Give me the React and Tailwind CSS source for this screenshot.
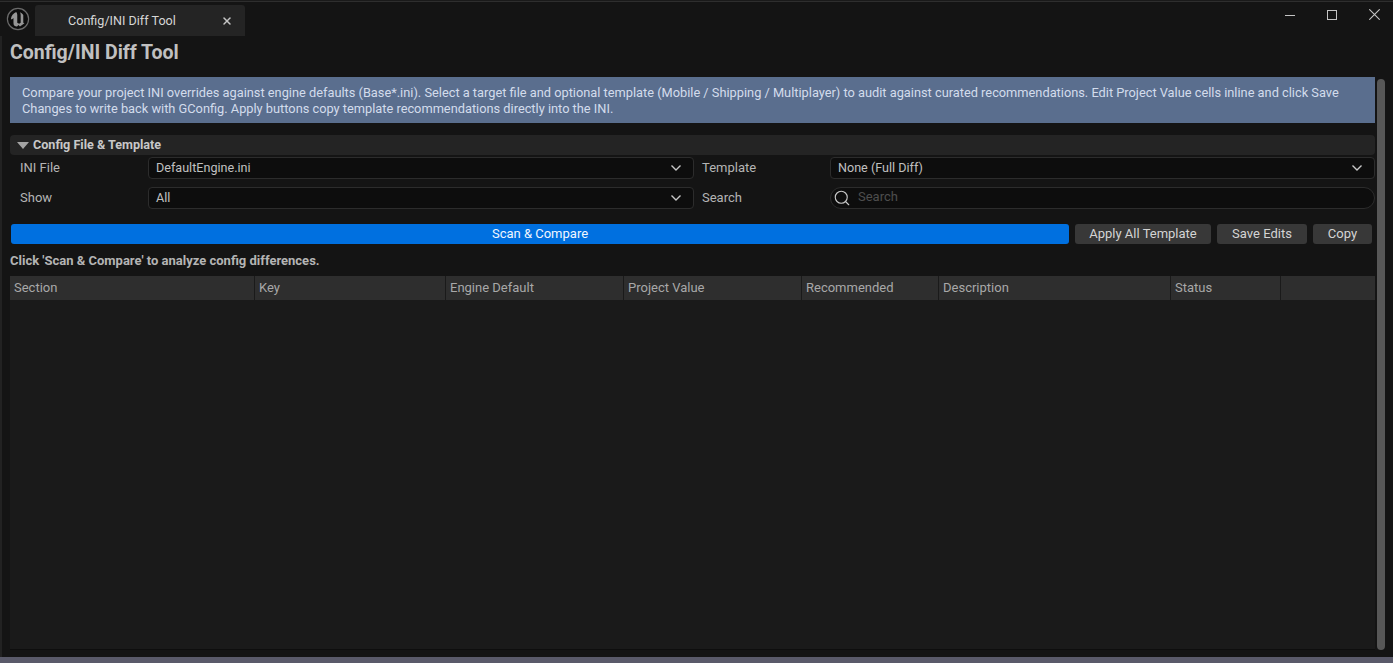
import { Search, X } from "lucide-react";

const columns = [
  { label: "Section", width: "w-[245px]" },
  { label: "Key", width: "w-[191px]" },
  { label: "Engine Default", width: "w-[178px]" },
  { label: "Project Value", width: "w-[178px]" },
  { label: "Recommended", width: "w-[137px]" },
  { label: "Description", width: "w-[232px]" },
  { label: "Status", width: "w-[110px]" },
  { label: "", width: "flex-1" },
];

function UnrealLogo() {
  return (
    <svg width="24" height="24" viewBox="0 0 24 24" className="shrink-0">
      <circle cx="12" cy="12" r="10.6" fill="#0d0d0d" stroke="#6a6a6a" strokeWidth="1.2" />
      <path
        transform="translate(-2.2 -2.2) scale(1.18)"
        d="M10.5 6.200C8 7.300 6.300 9.500 6 12.200c.9 0 1.700-.4 2.200-1.100v4.500c0 1.900 1.500 2.800 3 2.700l1.300-1.200 1.200 1.300 3.800-2.700-1-.5V8.600c-.9-1-1.700-1.600-2.800-2.200.5.800.6 1.600.6 2.200v6.700l-1.300.7-1.600-.8V8.500c0-.9-.4-1.700-.9-2.300z"
        fill="#969696"
      />
    </svg>
  );
}

function Chevron() {
  return (
    <svg width="10" height="6" viewBox="0 0 10 6" fill="none" stroke="#c8c8c8" strokeWidth="1.4">
      <path d="M.5.600 5 5 9.500.600" />
    </svg>
  );
}

function Dropdown({ value }) {
  return (
    <div className="flex h-[22px] items-center justify-between rounded-[4px] border border-[#2c2c2c] bg-[#0d0d0d] pl-[7px] pr-[12px] text-[12.6px] text-[#c0c0c0]">
      <span>{value}</span>
      <Chevron />
    </div>
  );
}

function ActionButton({ children, width }) {
  return (
    <button className={`h-5 rounded-[3px] bg-[#383838] text-[#d4d4d4] ${width}`}>{children}</button>
  );
}

export default function App() {
  return (
    <div className="flex h-screen w-full flex-col overflow-hidden bg-[#141414] font-['Roboto',sans-serif] text-[13px] leading-4">
      {/* Window chrome */}
      <div className="h-[2px] shrink-0 border-t border-t-[#1a1a1a] bg-[#2e2e2e]" />
      <div className="flex h-[34px] shrink-0 items-start pl-[6px]">
        <div className="mt-[5px]">
          <UnrealLogo />
        </div>
        <div className="ml-[5px] mt-[3px] flex h-[31px] w-[210px] items-center rounded-t-[3px] bg-[#242424] pl-[33px] pr-[12px] text-[12.6px] text-[#d6d6d6]">
          <span className="flex-1">Config/INI Diff Tool</span>
          <X size={12} strokeWidth={3} className="text-[#c4c4c4]" />
        </div>
        <div className="ml-auto flex gap-[31px] pr-[13px] pt-[7px]">
          <svg width="11" height="11" viewBox="0 0 11 11" stroke="#c4c4c4" strokeWidth="1">
            <path d="M0 6.500h10" />
          </svg>
          <svg width="11" height="11" viewBox="0 0 11 11" fill="none" stroke="#c4c4c4" strokeWidth="1">
            <rect x=".5" y="1.500" width="9" height="9" />
          </svg>
          <svg width="11" height="11" viewBox="0 0 11 11" stroke="#c4c4c4" strokeWidth="1.100">
            <path d="M.3.300l10.400 10.400M10.700.300.3 10.700" />
          </svg>
        </div>
      </div>

      <div className="flex min-h-0 flex-1 border-l-2 border-l-[#222222] pl-2">
        {/* Tool content */}
        <div className="flex w-[1365px] shrink-0 flex-col">
          <h1 className="mt-[5px] h-[24px] text-[19.5px] font-bold leading-[24px] text-[#c0c0c0]">Config/INI Diff Tool</h1>
          <div className="mt-[12px] h-[46px] bg-[#5a6e8e] px-3 py-2 text-[12.8px] text-[#d3dcec]">
            Compare your project INI overrides against engine defaults (Base*.ini). Select a target file and optional template (Mobile / Shipping / Multiplayer) to audit against curated recommendations. Edit Project Value cells inline and click Save Changes to write back with GConfig. Apply buttons copy template recommendations directly into the INI.
          </div>

          <div className="mt-3 flex h-5 items-center rounded-[4px] bg-[#242424] pl-[7px] text-[12.6px] font-bold text-[#c8c8c8]">
            <span className="mr-[4px] h-0 w-0 border-x-[6px] border-t-[7px] border-x-transparent border-t-[#a4a4a4]" />
            Config File & Template
          </div>

          <div className="mt-[2px] grid grid-cols-[138px_546px_136px_545px] items-center gap-y-2 text-[#b4b4b4]">
            <span className="pl-[10px]">INI File</span>
            <Dropdown value="DefaultEngine.ini" />
            <span className="pl-2">Template</span>
            <Dropdown value="None (Full Diff)" />
            <span className="pl-[10px]">Show</span>
            <Dropdown value="All" />
            <span className="pl-2">Search</span>
            <div className="flex h-[22px] items-center rounded-full border border-[#2c2c2c] bg-[#0d0d0d] pl-[2px]">
              <Search size={18} strokeWidth={1.5} className="text-[#c8c8c8]" />
              <span className="ml-[7px] mt-[-2px] text-[#4e4e4e]">Search</span>
            </div>
          </div>

          <div className="mt-[15px] flex gap-[6px] pl-px">
            <button className="h-5 w-[1058px] rounded-[3px] bg-[#0070e0] text-[#f0f6ff]">Scan & Compare</button>
            <ActionButton width="w-[136px]">Apply All Template</ActionButton>
            <ActionButton width="w-[90px]">Save Edits</ActionButton>
            <ActionButton width="w-[59px]">Copy</ActionButton>
          </div>

          <p className="mt-[9px] h-4 font-bold text-[#b4b4b4]">Click 'Scan & Compare' to analyze config differences.</p>

          <div className="mt-[7px] flex h-6 shrink-0 bg-[#2e2e2e] text-[#a8a8a8]">
            {columns.map((col) => (
              <div key={col.label || "end"} className={`flex items-center border-r border-r-[#1a1a1a] pl-1 last:border-r-0 ${col.width}`}>
                {col.label}
              </div>
            ))}
          </div>
          <div className="mb-[7px] flex-1 border-b border-b-[#0e0e0e] bg-[#1a1a1a]" />
        </div>

        {/* Scrollbar */}
        <div className="ml-[2px] mt-[43px] mb-[7px] w-2 rounded-full bg-[#575757]" />
      </div>
      <div className="h-[6px] shrink-0 bg-[#5a5a6a]" />
    </div>
  );
}
